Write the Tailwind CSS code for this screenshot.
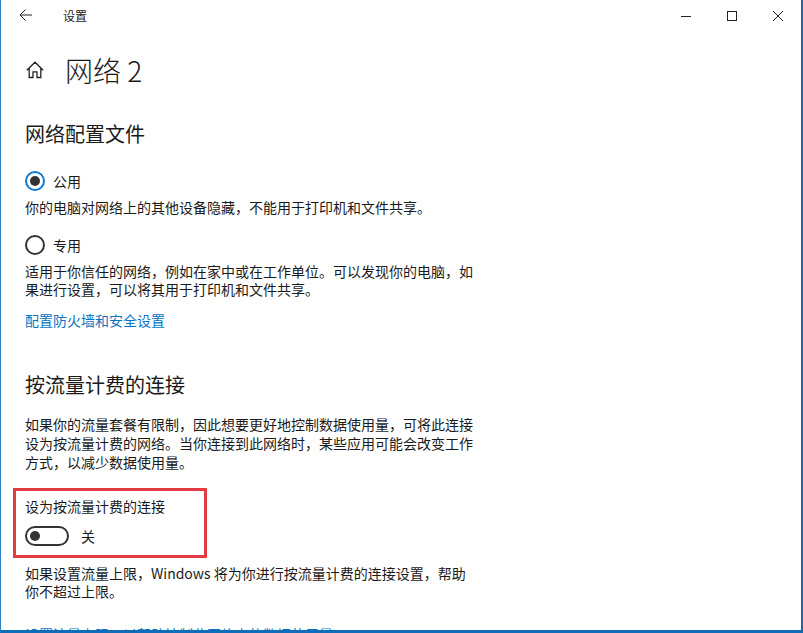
<!DOCTYPE html>
<html lang="zh">
<head>
<meta charset="utf-8">
<script src="https://cdn.jsdelivr.net/npm/@tailwindcss/browser@4"></script>
</head>
<body class="m-0 h-[633px] w-[803px] overflow-hidden bg-white font-['Noto_Sans_CJK_SC','Noto_Sans',sans-serif] text-[#1a1a1a]">
<div class="flex h-[633px] w-[803px] flex-col overflow-hidden border-b-[3px] border-l border-r-2 border-b-[#0f6cb8] border-l-[#2f80c0] border-r-[#1a68b0]">
  <header class="flex h-[32px] shrink-0 items-center">
    <svg class="mb-[3px] ml-[18px] h-[14px] w-[14px]" viewBox="0 0 14 14" fill="none" stroke="#222" stroke-width="1"><path d="M1 7H13M6.5 1.5L1 7l5.5 5.5"/></svg>
    <span class="ml-[30px] text-[12px]">设置</span>
    <div class="ml-auto flex items-center">
      <svg class="h-[12px] w-[12px]" viewBox="0 0 12 12" fill="none" stroke="#222"><path d="M1 6.5H11"/></svg>
      <svg class="ml-[34px] h-[12px] w-[12px]" viewBox="0 0 12 12" fill="none" stroke="#222"><rect x="1.5" y="1.5" width="9" height="9"/></svg>
      <svg class="ml-[34px] mr-[17px] h-[12px] w-[12px]" viewBox="0 0 12 12" fill="none" stroke="#222"><path d="M1 1L11 11M11 1L1 11"/></svg>
    </div>
  </header>
  <div class="mt-[16px] flex h-[44px] shrink-0 items-center">
    <svg class="ml-[25px] h-[18px] w-[18px]" viewBox="0 0 18 18" fill="none" stroke="#222" stroke-width="1.3"><path d="M0.8 9.2L9 1.2l8.2 8M3.2 7.2V16.5H7V10.8H11V16.5H14.8V7.2"/></svg>
    <h1 class="ml-[21px] text-[28px] font-light leading-[44px]">网络 2</h1>
  </div>
  <h2 class="ml-[24px] mt-[27px] shrink-0 text-[20px] font-normal leading-[30px]">网络配置文件</h2>
  <div class="ml-[24px] mt-[21px] flex h-[22px] shrink-0 items-center">
    <span class="flex h-[20px] w-[20px] items-center justify-center rounded-full border-2 border-[#0f78d0]"><span class="h-[10px] w-[10px] rounded-full bg-[#333]"></span></span>
    <span class="ml-[8px] text-[14px]">公用</span>
  </div>
  <p class="ml-[24px] mt-[6px] shrink-0 text-[14px] leading-[19px]">你的电脑对网络上的其他设备隐藏，不能用于打印机和文件共享。</p>
  <div class="ml-[24px] mt-[17px] flex h-[22px] shrink-0 items-center">
    <span class="h-[20px] w-[20px] rounded-full border-2 border-[#333]"></span>
    <span class="ml-[8px] text-[14px]">专用</span>
  </div>
  <p class="ml-[24px] mt-[6px] w-[450px] shrink-0 text-[14px] leading-[18px]">适用于你信任的网络，例如在家中或在工作单位。可以发现你的电脑，如果进行设置，可以将其用于打印机和文件共享。</p>
  <p class="ml-[24px] mt-[12px] shrink-0 text-[14px] leading-[20px] text-[#0a74c4]">配置防火墙和安全设置</p>
  <h2 class="ml-[24px] mt-[40px] shrink-0 text-[20px] font-normal leading-[30px]">按流量计费的连接</h2>
  <p class="ml-[24px] mt-[15px] w-[450px] shrink-0 text-[14px] leading-[19px]">如果你的流量套餐有限制，因此想要更好地控制数据使用量，可将此连接设为按流量计费的网络。当你连接到此网络时，某些应用可能会改变工作方式，以减少数据使用量。</p>
  <div class="ml-[12px] mt-[16px] h-[70px] w-[194px] shrink-0 border-[3px] border-[#e23c42] pl-[9px] pt-[5px]">
    <p class="text-[14px] leading-[20px]">设为按流量计费的连接</p>
    <div class="mt-[10px] flex items-center">
      <span class="flex h-[20px] w-[44px] items-center rounded-full border-2 border-[#333] pl-[3px]"><span class="h-[10px] w-[10px] rounded-full bg-[#333]"></span></span>
      <span class="ml-[12px] text-[14px] leading-[20px]">关</span>
    </div>
  </div>
  <p class="ml-[24px] mt-[6px] w-[450px] shrink-0 text-[14px] leading-[18px]">如果设置流量上限，Windows 将为你进行按流量计费的连接设置，帮助你不超过上限。</p>
  <p class="ml-[24px] mt-[24px] shrink-0 whitespace-nowrap text-[14px] leading-[20px] text-[#0a74c4]">设置流量上限，以帮助控制此网络上的数据使用量</p>
</div>
</body>
</html>
